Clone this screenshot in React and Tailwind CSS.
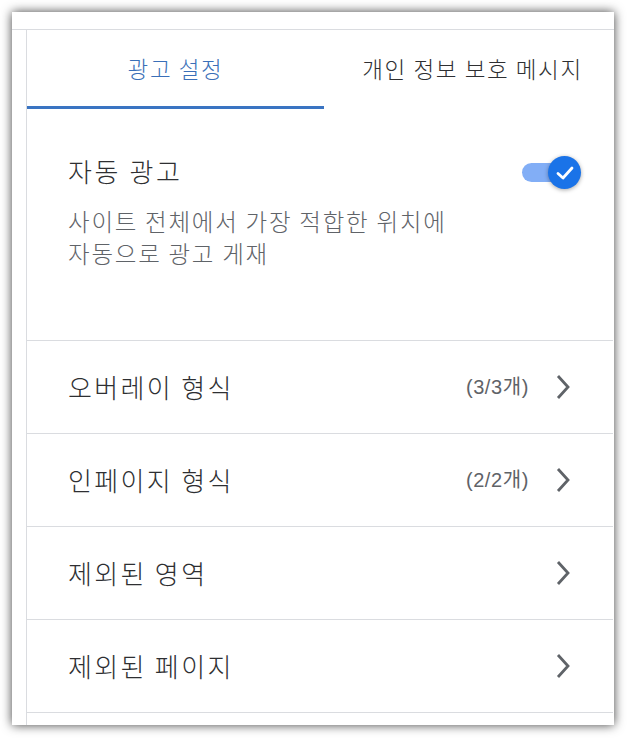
import React from "react";

const FONT = { fontFamily: '"Noto Sans CJK KR", "Noto Sans", sans-serif' };

function Chevron() {
  return (
    <svg width="16" height="26" viewBox="0 0 16 26" className="shrink-0">
      <path d="M3 2 L13 13 L3 24" fill="none" stroke="#5f6368" strokeWidth="2.8" />
    </svg>
  );
}

function Toggle() {
  return (
    <div className="relative w-[59px] h-[33px] mt-[4px]">
      <div className="absolute left-0 top-[7px] w-[46px] h-[19px] rounded-full bg-[#82aef6]" />
      <div className="absolute right-0 top-0 w-[33px] h-[33px] rounded-full bg-[#1a73e8] shadow-[0_1px_4px_rgba(0,0,0,0.35)] flex items-center justify-center">
        <svg width="20" height="16" viewBox="0 0 20 16">
          <path d="M3 8.5 L8 13 L17 3" fill="none" stroke="#fff" strokeWidth="2.8" strokeLinecap="round" strokeLinejoin="round" />
        </svg>
      </div>
    </div>
  );
}

function Row({ label, count }) {
  return (
    <div className="h-[93px] border-t border-[#dadce0] flex items-center pl-[41px] pr-[42px]">
      <div className="flex-1 text-[26px] font-light tracking-[0.09em] text-[#2e2f32] leading-none">{label}</div>
      {count && (
        <div
          className="text-[20px] tracking-[0.03em] text-[#5f6368] mr-[26px] leading-none"
          style={{ fontFamily: '"Liberation Sans", "Noto Sans CJK KR", sans-serif' }}
        >
          {count}
        </div>
      )}
      <Chevron />
    </div>
  );
}

export default function App() {
  return (
    <div className="w-[627px] h-[738px] bg-white pt-[12px] pl-[12px]" style={FONT}>
      <div className="w-[602px] h-[713px] bg-white overflow-hidden shadow-[0_0_10px_rgba(0,0,0,0.75)]">
        {/* top strip */}
        <div className="h-[18px] border-b border-[#dadce0]" />

        <div className="flex h-full">
          <div className="w-[15px] shrink-0 border-r border-[#dadce0]" />
          <div className="w-[586px] shrink-0 overflow-hidden">
            {/* tabs */}
            <div className="flex h-[79px] font-light tracking-[0.1em]">
              <div className="w-[297px] shrink-0 border-b-[3px] border-[#3a74c2] flex items-center justify-center pt-[2px] text-[22.5px] text-[#3a6fb8]">
                광고 설정
              </div>
              <div className="w-[297px] shrink-0 flex items-center justify-center pb-[1px] text-[22.5px] text-[#2e2f32]">
                개인 정보 보호 메시지
              </div>
            </div>

            {/* auto ads */}
            <div className="h-[231px] pl-[41px] pr-[32px] pt-[43px] font-light">
              <div className="flex items-center justify-between">
                <div className="text-[26px] leading-[36px] tracking-[0.1em] text-[#2e2f32]">자동 광고</div>
                <Toggle />
              </div>
              <div className="mt-[16px] text-[23.5px] leading-[32px] tracking-[0.075em] text-[#5f6368]">
                사이트 전체에서 가장 적합한 위치에
                <br />
                자동으로 광고 게재
              </div>
            </div>

            <Row label="오버레이 형식" count="(3/3개)" />
            <Row label="인페이지 형식" count="(2/2개)" />
            <Row label="제외된 영역" />
            <Row label="제외된 페이지" />
            <div className="border-t border-[#dadce0] h-[20px]" />
          </div>
        </div>
      </div>
    </div>
  );
}
